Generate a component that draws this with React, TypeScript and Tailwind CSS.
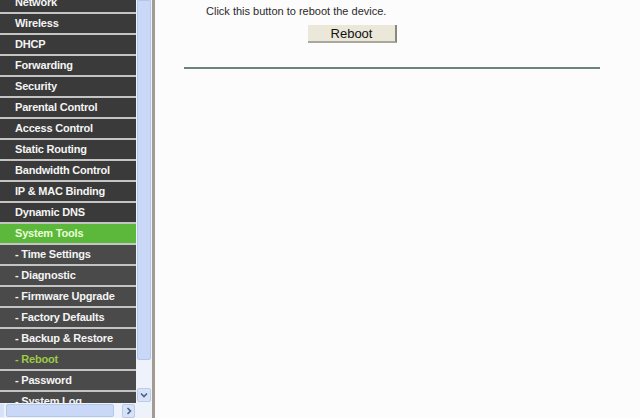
const menu = [
  { label: "Network" },
  { label: "Wireless" },
  { label: "DHCP" },
  { label: "Forwarding" },
  { label: "Security" },
  { label: "Parental Control" },
  { label: "Access Control" },
  { label: "Static Routing" },
  { label: "Bandwidth Control" },
  { label: "IP & MAC Binding" },
  { label: "Dynamic DNS" },
  { label: "System Tools", active: true },
  { label: "- Time Settings", sub: true },
  { label: "- Diagnostic", sub: true },
  { label: "- Firmware Upgrade", sub: true },
  { label: "- Factory Defaults", sub: true },
  { label: "- Backup & Restore", sub: true },
  { label: "- Reboot", sub: true, current: true },
  { label: "- Password", sub: true },
  { label: "- System Log", sub: true },
];

export default function App() {
  return (
    <div className="flex h-[418px] w-[640px] overflow-hidden bg-[#fdfcfc] font-['Liberation_Sans',Arial,sans-serif]">
      {/* Sidebar frame */}
      <div className="flex h-full w-[152px] shrink-0 flex-col">
        <div className="flex min-h-0 flex-1">
          {/* Menu */}
          <div className="h-full w-[136px] overflow-hidden bg-[#c9c9c9]">
            <div className="-mt-[7px] flex flex-col">
              {menu.map((m, i) => (
                <div
                  key={i}
                  className={
                    "flex h-[21px] shrink-0 items-center border-b-2 border-[#c4c4c4] pl-[15px] text-[11px] font-bold tracking-[-0.2px] " +
                    (m.active
                      ? "bg-[#5cb83a] text-[#e8ffd8]"
                      : m.sub
                      ? "bg-[#4a4a4a] text-[#f4f4f4]"
                      : "bg-[#3a3a3a] text-[#f4f4f4]")
                  }
                >
                  <span className={m.current ? "text-[#9ccb45]" : ""}>{m.label}</span>
                </div>
              ))}
            </div>
          </div>
          {/* Vertical scrollbar */}
          <div className="flex h-full w-[16px] flex-col bg-[#eef2fb] px-[1px]">
            <div className="h-[360px] w-full rounded-b-[2px] border border-[#b4c6ea] bg-[#c8d8f6]" />
            <div className="flex-1" />
            <div className="mb-[1px] flex h-[14px] w-full items-center justify-center rounded-[2px] border border-[#bccbe8] bg-[#d6e2f8]">
              <svg width="8" height="6" viewBox="0 0 8 6">
                <path d="M1 1.5 L4 4.5 L7 1.5" fill="none" stroke="#4d6185" strokeWidth="1.6" />
              </svg>
            </div>
          </div>
        </div>
        {/* Horizontal scrollbar */}
        <div className="flex h-[15px] shrink-0 items-center bg-[#eef2fb]">
          <div className="h-[13px] w-[4px] bg-[#d6e2f8]" />
          <div className="ml-[2px] h-[13px] w-[108px] rounded-[2px] border border-[#b4c6ea] bg-[#c8d8f6]" />
          <div className="ml-[8px] flex h-[14px] w-[13px] items-center justify-center rounded-[2px] border border-[#bccbe8] bg-[#d6e2f8]">
            <svg width="6" height="8" viewBox="0 0 6 8">
              <path d="M1.5 1 L4.5 4 L1.5 7" fill="none" stroke="#4d6185" strokeWidth="1.6" />
            </svg>
          </div>
          <div className="flex-1" />
        </div>
      </div>
      {/* Frame divider */}
      <div className="h-full w-[3px] shrink-0 bg-[#a29d92]" />
      {/* Content */}
      <div className="flex flex-1 flex-col pl-[29px]">
        <p className="mt-[3px] pl-[22px] text-[11px] text-[#2a2a2a]">Click this button to reboot the device.</p>
        <div className="mt-[1px] pl-[124px]">
          <button className="h-[18px] w-[89px] border-r-2 border-b-2 border-r-[#8a877c] border-b-[#aaa79c] bg-[#ebe8d9] text-[13px] leading-none text-[#111]">
            Reboot
          </button>
        </div>
        <div className="mt-[22px] h-[2px] w-[416px] bg-[#6d8378]" />
      </div>
    </div>
  );
}
